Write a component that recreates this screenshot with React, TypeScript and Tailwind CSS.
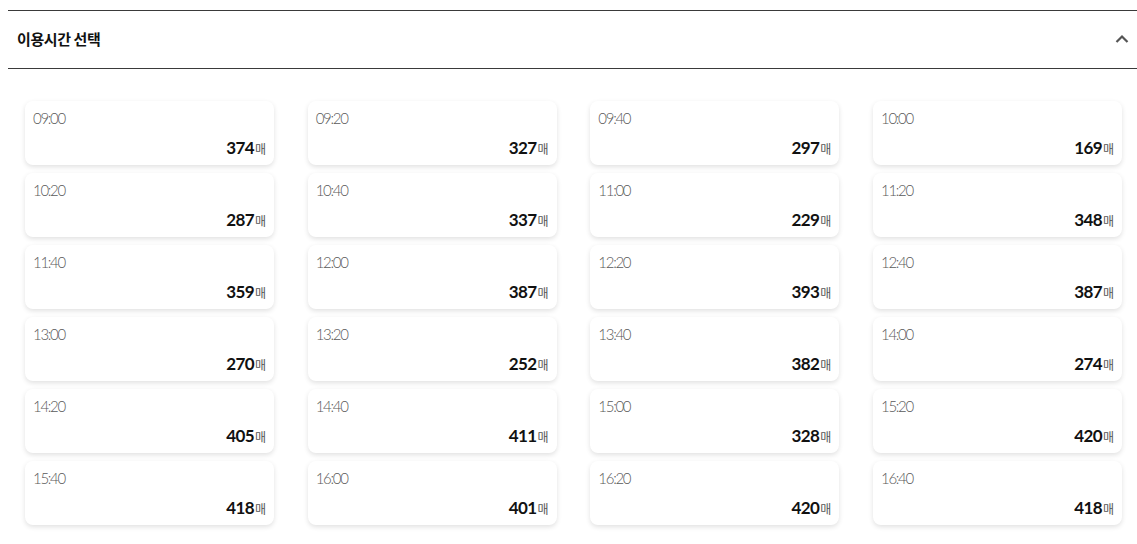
import React from "react";

const slots: [string, number][] = [
  ["09:00", 374], ["09:20", 327], ["09:40", 297], ["10:00", 169],
  ["10:20", 287], ["10:40", 337], ["11:00", 229], ["11:20", 348],
  ["11:40", 359], ["12:00", 387], ["12:20", 393], ["12:40", 387],
  ["13:00", 270], ["13:20", 252], ["13:40", 382], ["14:00", 274],
  ["14:20", 405], ["14:40", 411], ["15:00", 328], ["15:20", 420],
  ["15:40", 418], ["16:00", 401], ["16:20", 420], ["16:40", 418],
];

export default function App() {
  return (
    <div className="bg-white w-[1137px] h-[544px] overflow-hidden" style={{ fontFamily: "Lato, 'Noto Sans CJK KR', sans-serif" }}>
      <div className="pt-[10px] pl-2">
        <div className="border-t border-b border-[#3a3a3a] h-[59px] flex items-center justify-between pl-[9px] pr-[6px]">
          <span className="text-[15px] font-bold text-[#111] tracking-[-0.4px]" style={{ fontFamily: "'Noto Sans CJK KR', sans-serif" }}>
            이용시간 선택
          </span>
          <svg width="14" height="10" viewBox="0 0 14 10" className="mr-[2px] mt-[-1px]">
            <path d="M1.5 8 L7 2.5 L12.5 8" fill="none" stroke="#555" strokeWidth="2.2" />
          </svg>
        </div>
        <div className="grid grid-cols-4 gap-x-[33.7px] gap-y-2 pt-[32px] pl-[17px] pr-[15px]">
          {slots.map(([t, n]) => (
            <div key={t} className="h-[64px] rounded-lg bg-white shadow-[0_2px_5px_rgba(0,0,0,0.12)] flex flex-col justify-between pt-[7px] pb-[6px] px-2">
              <div className="text-[15px] leading-[20px] font-light text-[#5a5a5a] tracking-[-1.3px]">{t}</div>
              <div className="flex items-baseline justify-end leading-[20px]">
                <span className="text-[17px] font-bold text-[#111] tracking-[-0.6px]">{n}</span>
                <span className="text-[12px] text-[#555] ml-[1px]" style={{ fontFamily: "'Noto Sans CJK KR', sans-serif" }}>매</span>
              </div>
            </div>
          ))}
        </div>
      </div>
    </div>
  );
}
